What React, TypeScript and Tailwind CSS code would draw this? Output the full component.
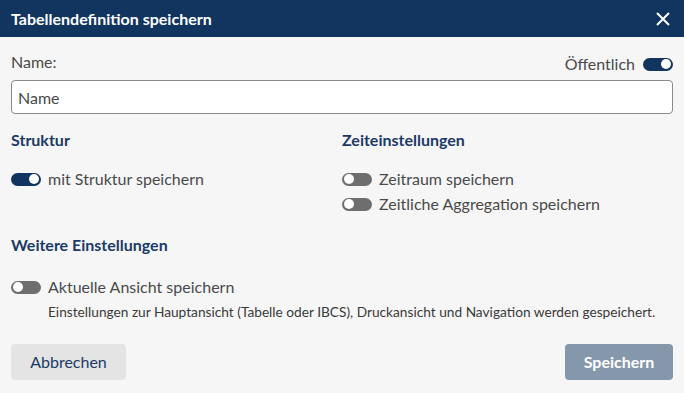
import { useState } from 'react'

function Toggle({ on, onClick }: { on: boolean; onClick: () => void }) {
  return (
    <button
      type="button"
      onClick={onClick}
      className={
        'relative flex items-center w-[30px] h-[13px] rounded-full shrink-0 ' +
        (on ? 'bg-[#12355f] justify-end pr-[2px]' : 'bg-[#6e6e6e] justify-start pl-[2px]')
      }
    >
      <span className="block w-[10px] h-[10px] rounded-full bg-white" />
    </button>
  )
}

function ToggleRow({ label, on, onClick }: { label: string; on: boolean; onClick: () => void }) {
  return (
    <div className="flex items-center gap-[7px] h-[20px]">
      <Toggle on={on} onClick={onClick} />
      <span className="text-[16px] text-[#4a4a4a] leading-[20px]">{label}</span>
    </div>
  )
}

export default function App() {
  const [name, setName] = useState('')
  const [pub, setPub] = useState(true)
  const [struktur, setStruktur] = useState(true)
  const [zeitraum, setZeitraum] = useState(false)
  const [aggregation, setAggregation] = useState(false)
  const [ansicht, setAnsicht] = useState(false)

  return (
    <div className="w-[684px] h-[393px] bg-[#f6f6f6] flex flex-col font-['Lato','Liberation_Sans',sans-serif]">
      <div className="h-[37px] bg-[#12355f] flex items-center justify-between pl-[11px] pr-[13px]">
        <h1 className="text-white text-[16px] font-bold">Tabellendefinition speichern</h1>
        <button type="button" className="text-white">
          <svg width="16" height="16" viewBox="0 0 16 16" fill="none" stroke="currentColor" strokeWidth="2">
            <path d="M2 2 L14 14 M14 2 L2 14" />
          </svg>
        </button>
      </div>

      <div className="px-[11px] pt-[16px] flex flex-col">
        <div className="flex items-center justify-between h-[22px]">
          <span className="text-[16px] text-[#4a4a4a] -mt-[4px]">Name:</span>
          <div className="flex items-center gap-[8px]">
            <span className="text-[16px] text-[#4a4a4a]">Öffentlich</span>
            <Toggle on={pub} onClick={() => setPub(!pub)} />
          </div>
        </div>
        <input
          value={name}
          onChange={(e) => setName(e.target.value)}
          placeholder="Name"
          className="mt-[5px] h-[34px] w-full rounded-[4px] border border-[#8a8a8a] bg-white px-[6px] text-[16px] text-[#333] placeholder:text-[#4a4a4a] focus:outline-none"
        />

        <div className="grid grid-cols-2 mt-[16px]">
          <div className="flex flex-col">
            <h2 className="text-[16px] font-bold text-[#1b3a66] leading-[20px]">Struktur</h2>
            <div className="mt-[19px]">
              <ToggleRow label="mit Struktur speichern" on={struktur} onClick={() => setStruktur(!struktur)} />
            </div>
          </div>
          <div className="flex flex-col">
            <h2 className="text-[16px] font-bold text-[#1b3a66] leading-[20px]">Zeiteinstellungen</h2>
            <div className="mt-[19px] flex flex-col gap-[5px]">
              <ToggleRow label="Zeitraum speichern" on={zeitraum} onClick={() => setZeitraum(!zeitraum)} />
              <ToggleRow label="Zeitliche Aggregation speichern" on={aggregation} onClick={() => setAggregation(!aggregation)} />
            </div>
          </div>
        </div>

        <h2 className="mt-[21px] text-[16px] font-bold text-[#1b3a66] leading-[20px]">Weitere Einstellungen</h2>
        <div className="mt-[22px]">
          <ToggleRow label="Aktuelle Ansicht speichern" on={ansicht} onClick={() => setAnsicht(!ansicht)} />
        </div>
        <p className="mt-[7px] pl-[37px] text-[13.7px] leading-[16px] text-[#3a3a3a]">
          Einstellungen zur Hauptansicht (Tabelle oder IBCS), Druckansicht und Navigation werden gespeichert.
        </p>

        <div className="mt-[24px] flex justify-between">
          <button type="button" className="w-[115px] h-[36px] rounded-[4px] bg-[#e4e4e4] text-[16px] text-[#1b3a66]">
            Abbrechen
          </button>
          <button type="button" disabled className="w-[108px] h-[36px] rounded-[4px] bg-[#8597ab] text-[16px] font-bold text-white">
            Speichern
          </button>
        </div>
      </div>
    </div>
  )
}
